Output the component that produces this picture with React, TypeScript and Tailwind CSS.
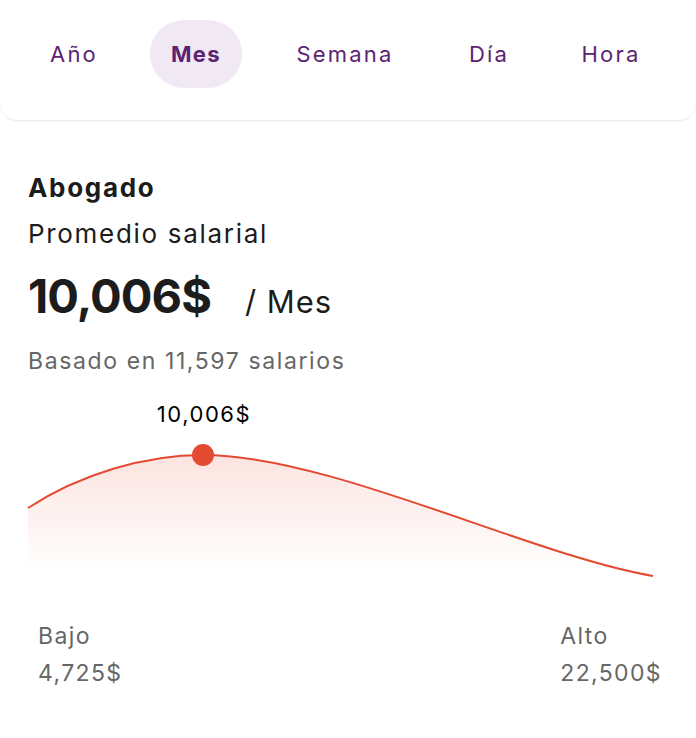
import React from "react";

const tabs = [
  { t: "Año", w: "w-[90px]" },
  { t: "Mes", w: "w-[92px]" },
  { t: "Semana", w: "w-[144px]" },
  { t: "Día", w: "w-[82px]" },
  { t: "Hora", w: "w-[100px]" },
];

export default function App() {
  return (
    <div className="w-[696px] h-[738px] bg-white text-[#1c1c1c] font-[Inter,'Noto_Sans',sans-serif]">
      <div className="h-[121px] rounded-b-[18px] border-b border-[#ececec] shadow-[0_1px_3px_rgba(0,0,0,0.04)] pt-[20px] pl-[29px] flex items-start gap-[31px]">
        {tabs.map(({ t, w }) => (
          <div
            key={t}
            className={
              t === "Mes"
                ? "h-[68px] " + w + " flex items-center justify-center rounded-full text-[22px] text-[#5c2372] bg-[#f0e8f3] font-bold tracking-[0.06em]"
                : "h-[68px] " + w + " flex items-center justify-center rounded-full text-[22px] text-[#5c2372] font-normal tracking-[0.1em]"
            }
          >
            {t}
          </div>
        ))}
      </div>

      <div className="pl-[28px] pt-[50px]">
        <div className="text-[26px] font-bold leading-[34px] tracking-[0.065em]">Abogado</div>
        <div className="text-[26px] leading-[34px] mt-[12px] tracking-[0.065em]">Promedio salarial</div>
        <div className="flex items-baseline mt-[16px]">
          <span className="text-[47px] font-bold leading-[58px] tracking-[-0.02em]">10,006$</span>
          <span className="text-[31px] ml-[34px] tracking-[0.03em]">/ Mes</span>
        </div>
        <div className="text-[23px] text-[#666666] mt-[19px] leading-[32px] tracking-[0.07em]">Basado en 11,597 salarios</div>
      </div>

      <div className="relative h-[220px] mt-[13px]">
        <svg width="696" height="220" viewBox="0 390 696 220" className="absolute left-0 top-0">
          <defs>
            <linearGradient id="fillg" x1="0" y1="455" x2="0" y2="572" gradientUnits="userSpaceOnUse">
              <stop offset="0" stopColor="#e8543c" stopOpacity="0.16" />
              <stop offset="1" stopColor="#e8543c" stopOpacity="0" />
            </linearGradient>
          </defs>
          <path
            d="M28 508 C 80 474, 145 455, 203 455 C 330 455, 530 555, 653 576 L 653 575 L 28 575 Z"
            fill="url(#fillg)"
          />
          <path
            d="M28 508 C 80 474, 145 455, 203 455 C 330 455, 530 555, 653 576"
            fill="none"
            stroke="#e4492f"
            strokeWidth="2"
          />
          <circle cx="203" cy="455" r="11" fill="#e34a32" />
        </svg>
        <div className="absolute left-[144px] top-[8px] w-[120px] text-center text-[22px] text-black leading-[32px] tracking-[0.07em]">10,006$</div>
      </div>

      <div className="flex justify-between pl-[38px] pr-[34px] mt-[8px] text-[23px] text-[#666666] leading-[37px] tracking-[0.06em]">
        <div>
          <div>Bajo</div>
          <div>4,725$</div>
        </div>
        <div>
          <div>Alto</div>
          <div>22,500$</div>
        </div>
      </div>
    </div>
  );
}
